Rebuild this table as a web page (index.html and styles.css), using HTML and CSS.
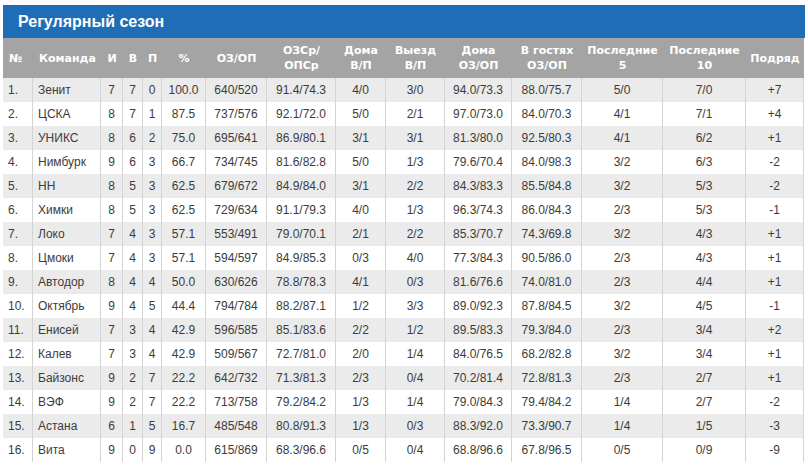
FILE: index.html
```html
<!DOCTYPE html>
<html lang="ru">
<head>
<meta charset="utf-8">
<title>Регулярный сезон</title>
<link rel="stylesheet" href="styles.css">
</head>
<body>
<div class="standings">
  <div class="title">Регулярный сезон</div>
  <div class="grid">
    <div class="hc left">№</div><div class="hc left">Команда</div><div class="hc">И</div><div class="hc">В</div><div class="hc">П</div><div class="hc">%</div><div class="hc">ОЗ/ОП</div><div class="hc">ОЗСр/<br>ОПСр</div><div class="hc">Дома<br>В/П</div><div class="hc">Выезд<br>В/П</div><div class="hc">Дома<br>ОЗ/ОП</div><div class="hc">В гостях<br>ОЗ/ОП</div><div class="hc">Последние<br>5</div><div class="hc">Последние<br>10</div><div class="hc">Подряд</div>
  </div>
  <div id="rows"></div>
</div>
<script>
const data = [
["1.","Зенит","7","7","0","100.0","640/520","91.4/74.3","4/0","3/0","94.0/73.3","88.0/75.7","5/0","7/0","+7"],
["2.","ЦСКА","8","7","1","87.5","737/576","92.1/72.0","5/0","2/1","97.0/73.0","84.0/70.3","4/1","7/1","+4"],
["3.","УНИКС","8","6","2","75.0","695/641","86.9/80.1","3/1","3/1","81.3/80.0","92.5/80.3","4/1","6/2","+1"],
["4.","Нимбурк","9","6","3","66.7","734/745","81.6/82.8","5/0","1/3","79.6/70.4","84.0/98.3","3/2","6/3","-2"],
["5.","НН","8","5","3","62.5","679/672","84.9/84.0","3/1","2/2","84.3/83.3","85.5/84.8","3/2","5/3","-2"],
["6.","Химки","8","5","3","62.5","729/634","91.1/79.3","4/0","1/3","96.3/74.3","86.0/84.3","2/3","5/3","-1"],
["7.","Локо","7","4","3","57.1","553/491","79.0/70.1","2/1","2/2","85.3/70.7","74.3/69.8","3/2","4/3","+1"],
["8.","Цмоки","7","4","3","57.1","594/597","84.9/85.3","0/3","4/0","77.3/84.3","90.5/86.0","2/3","4/3","+1"],
["9.","Автодор","8","4","4","50.0","630/626","78.8/78.3","4/1","0/3","81.6/76.6","74.0/81.0","2/3","4/4","+1"],
["10.","Октябрь","9","4","5","44.4","794/784","88.2/87.1","1/2","3/3","89.0/92.3","87.8/84.5","3/2","4/5","-1"],
["11.","Енисей","7","3","4","42.9","596/585","85.1/83.6","2/2","1/2","89.5/83.3","79.3/84.0","2/3","3/4","+2"],
["12.","Калев","7","3","4","42.9","509/567","72.7/81.0","2/0","1/4","84.0/76.5","68.2/82.8","3/2","3/4","+1"],
["13.","Байзонс","9","2","7","22.2","642/732","71.3/81.3","2/3","0/4","70.2/81.4","72.8/81.3","2/3","2/7","+1"],
["14.","ВЭФ","9","2","7","22.2","713/758","79.2/84.2","1/3","1/4","79.0/84.3","79.4/84.2","1/4","2/7","-2"],
["15.","Астана","6","1","5","16.7","485/548","80.8/91.3","1/3","0/3","88.3/92.0","73.3/90.7","1/4","1/5","-3"],
["16.","Вита","9","0","9","0.0","615/869","68.3/96.6","0/5","0/4","68.8/96.6","67.8/96.5","0/5","0/9","-9"]
];
const host = document.getElementById("rows");
data.forEach((r, i) => {
  const row = document.createElement("div");
  row.className = "grid row" + (i % 2 === 0 ? " odd" : "");
  r.forEach((v, j) => {
    const c = document.createElement("div");
    c.className = "c" + (j < 2 ? " left" : "");
    c.textContent = v;
    row.appendChild(c);
  });
  host.appendChild(row);
});
</script>
</body>
</html>
```
FILE: styles.css
```css
html, body {
  margin: 0;
  padding: 0;
  background: #ffffff;
}
.standings {
  margin: 5px 0 0 3px;
  width: 802px;
}
.title {
  height: 33px;
  background: #1f6db6;
  color: #ffffff;
  font-family: "Liberation Sans", Arial, sans-serif;
  font-weight: bold;
  font-size: 16px;
  line-height: 33px;
  padding-left: 15px;
  box-sizing: border-box;
}
.grid {
  display: grid;
  grid-template-columns: 30px 68px 22px 20px 19px 44px 61px 69px 50px 59px 67px 70px 81px 83px 58px;
}
.hc {
  height: 40px;
  background: #a4a4a4;
  color: #ffffff;
  font-family: "DejaVu Sans", Verdana, sans-serif;
  font-weight: bold;
  font-size: 11px;
  line-height: 15px;
  display: flex;
  align-items: center;
  justify-content: center;
  text-align: center;
  white-space: nowrap;
}
.hc.left {
  justify-content: flex-start;
  padding-left: 6px;
}
.row .c {
  height: 24px;
  border-right: 1px solid #d4d4d4;
  box-sizing: border-box;
  font-family: "Liberation Sans", Arial, sans-serif;
  font-size: 12px;
  color: #3c3c3c;
  line-height: 24px;
  text-align: center;
  white-space: nowrap;
}
.row .c.left {
  text-align: left;
  padding-left: 5px;
}
.row.odd .c {
  background: #ebebeb;
}
```
